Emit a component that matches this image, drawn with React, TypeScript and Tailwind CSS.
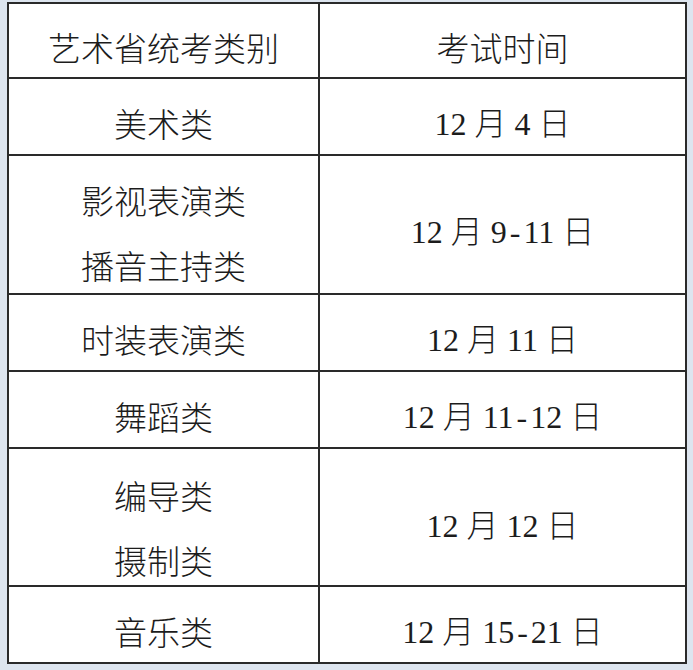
const cjk = { fontFamily: '"Noto Sans CJK SC", sans-serif' };
const dateFont = { fontFamily: '"Liberation Serif", "Noto Sans CJK SC", serif' };

type Row = { kinds: string[]; date: string; h: string; pad: string; datePad: string; last?: boolean };

const rows: Row[] = [
  { kinds: ["美术类"], date: "12 月 4 日", h: "h-[77px]", pad: "pt-[12px]", datePad: "pt-[12px]" },
  { kinds: ["影视表演类", "播音主持类"], date: "12 月 9-11 日", h: "h-[139px]", pad: "pt-[12px]", datePad: "pt-[10px]" },
  { kinds: ["时装表演类"], date: "12 月 11 日", h: "h-[77px]", pad: "pt-[12px]", datePad: "pt-[12px]" },
  { kinds: ["舞蹈类"], date: "12 月 11-12 日", h: "h-[77px]", pad: "pt-[12px]", datePad: "pt-[12px]" },
  { kinds: ["编导类", "摄制类"], date: "12 月 12 日", h: "h-[138px]", pad: "pt-[14px]", datePad: "pt-[10px]" },
  { kinds: ["音乐类"], date: "12 月 15-21 日", h: "h-[75px]", pad: "pt-[12px]", datePad: "pt-[12px]", last: true },
];

// hyphen in the source is a wide (half-em) dash, so give it a bit of room
function DateText({ text }: { text: string }) {
  const parts = text.split("-");
  return (
    <span>
      {parts.map((p, i) => (
        <span key={i}>
          {i > 0 && <span className="mx-[3px]">-</span>}
          {p}
        </span>
      ))}
    </span>
  );
}

export default function App() {
  return (
    <div className="w-[693px] h-[670px] bg-[#dde5ef] pl-[7px] pt-[2px]">
      <div className="w-[680px] h-[662px] bg-white border-2 border-[#2a2a2a] text-[#1c1c1c]">
        {/* header */}
        <div className="grid grid-cols-[311px_1fr] h-[75px] border-b-2 border-[#2a2a2a]">
          <div
            className="flex items-center justify-center border-r-2 border-[#2a2a2a] text-[33px] font-light leading-[44px] pt-[12px]"
            style={cjk}
          >
            艺术省统考类别
          </div>
          <div className="flex items-center justify-center text-[33px] font-light leading-[44px] pt-[12px]" style={cjk}>
            考试时间
          </div>
        </div>

        {rows.map((r) => (
          <div
            key={r.date}
            className={`grid grid-cols-[311px_1fr] ${r.h} ${r.last ? "" : "border-b-2 border-[#2a2a2a]"}`}
          >
            <div
              className={`flex flex-col items-center justify-center border-r-2 border-[#2a2a2a] text-[33px] font-light leading-[65px] ${r.pad}`}
              style={cjk}
            >
              {r.kinds.map((k) => (
                <span key={k}>{k}</span>
              ))}
            </div>
            <div
              className={`flex items-center justify-center text-[32px] font-light leading-[44px] whitespace-pre ${r.datePad}`}
              style={dateFont}
            >
              <DateText text={r.date} />
            </div>
          </div>
        ))}
      </div>
    </div>
  );
}
